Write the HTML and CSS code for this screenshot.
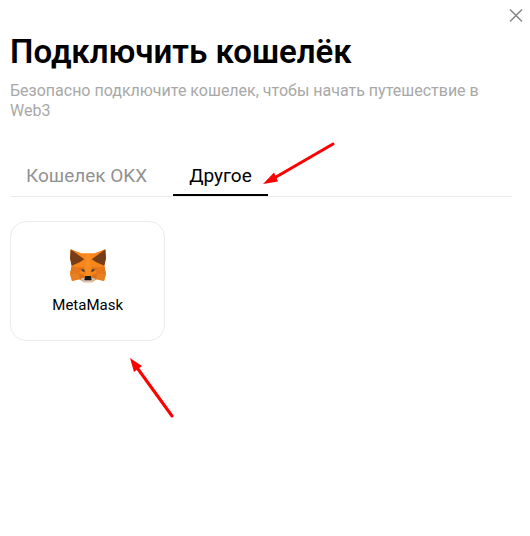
FILE: index.html
```html
<!DOCTYPE html>
<html lang="ru">
<head>
<meta charset="utf-8">
<meta name="viewport" content="width=device-width, initial-scale=1">
<title>Подключить кошелёк</title>
<link rel="stylesheet" href="styles.css">
</head>
<body>
<main class="dialog">
  <header class="top">
    <button class="close" type="button" aria-label="Закрыть">
      <svg width="14" height="14" viewBox="0 0 14 14" aria-hidden="true"><path d="M1 1.500l12 12M13 1.500L1 13.500"/></svg>
    </button>
  </header>
  <h1 class="title">Подключить кошелёк</h1>
  <p class="subtitle">Безопасно подключите кошелек, чтобы начать путешествие в Web3</p>
  <div class="tabs" role="tablist">
    <button class="tab" type="button" role="tab" aria-selected="false">Кошелек OKX</button>
    <button class="tab tab-active" type="button" role="tab" aria-selected="true">Другое
      <svg class="arrow arrow-tab" width="74" height="44" viewBox="0 0 74 44" aria-hidden="true"><path class="shaft" d="M71 2L14 35"/><path class="head" d="M1 42L12 30.500L16 39.500z"/></svg>
    </button>
  </div>
  <div class="wallets">
    <button class="wallet" type="button">
      <svg class="fox" width="36" height="34" viewBox="0 0 108 102" aria-hidden="true">
        <path fill="#f6851b" d="M2 1L35 13H73L106 1L108 27L103 50L108 75L102 96L80 91L67 100H41L28 91L6 96L0 75L5 50L0 27z"/>
        <path fill="#e4761b" d="M0 75L5 51L29 57L31 74zM108 75L103 51L79 57L77 74z"/>
        <path fill="#e88022" d="M0 75H30L28 91L6 96zM108 75H78L80 91L102 96z"/>
        <path fill="#763d16" d="M2 1L43 31L29 40L5 50L0 27zM106 1L65 31L79 40L103 50L108 27z"/>
        <path fill="#dc701a" d="M25 56L41 55L46 71L32 66zM83 56L67 55L62 71L76 66zM28 74L43 78L40 90L28 91zM80 74L65 78L68 90L80 91z"/>
        <path fill="#fa8c22" d="M48 14H60L63 53L60 83H48L45 53z"/>
        <path fill="#3c3a3a" d="M34 60L43 62L44 69L37 66zM74 60L65 62L64 69L71 66z"/>
        <path fill="#d7c1b3" d="M31 89L43 86H65L77 89L67 100H41z"/>
        <path fill="#161616" d="M45 81H63L65 94H43z"/>
      </svg>
      <span>MetaMask</span>
      <svg class="arrow arrow-wallet" width="46" height="62" viewBox="0 0 46 62" aria-hidden="true"><path class="shaft" d="M43 59L9 12"/><path class="head" d="M1 1L13 9L5 15z"/></svg>
    </button>
  </div>
</main>
</body>
</html>
```
FILE: styles.css
```css
* { box-sizing: border-box; }
body {
  margin: 0;
  background: #fff;
  color: #000;
  font-family: Roboto, "Noto Sans", sans-serif;
}
button {
  margin: 0;
  padding: 0;
  border: 0;
  background: none;
  color: inherit;
  font: inherit;
}
.dialog {
  min-height: 100vh;
  padding: 8px 18px 24px 10px;
}
.top {
  display: flex;
  justify-content: flex-end;
  margin-right: -11px;
}
.close {
  display: flex;
}
.close path {
  fill: none;
  stroke: #868686;
  stroke-width: 1.5;
}
.title {
  margin: 8px 0 0;
  font-size: 33px;
  line-height: 44px;
  font-weight: 600;
}
.subtitle {
  margin: 7px 0 0;
  color: #a8a8a8;
  font-size: 16px;
  line-height: 20px;
}
.tabs {
  display: flex;
  gap: 10px;
  margin-top: 35px;
  border-bottom: 1px solid #ebebeb;
}
.tab {
  position: relative;
  height: 40px;
  padding: 2px 16px 0;
  border-bottom: 2px solid transparent;
  color: #929292;
  font-size: 19px;
  line-height: 36px;
}
.tab-active {
  border-bottom-color: #000;
  color: #000;
}
.wallets {
  display: grid;
  grid-template-columns: repeat(auto-fill, minmax(150px, 1fr));
  gap: 18px;
  margin-top: 24px;
}
.wallet {
  position: relative;
  display: flex;
  flex-direction: column;
  align-items: center;
  gap: 12px;
  padding: 27px 12px 25px;
  border: 1px solid #ebebeb;
  border-radius: 16px;
  font-size: 15px;
  line-height: 20px;
}
.arrow {
  position: absolute;
  overflow: visible;
  pointer-events: none;
}
.arrow-tab {
  top: -14px;
  left: 89px;
}
.arrow-wallet {
  top: 135px;
  left: 118px;
}
.shaft {
  fill: none;
  stroke: #f00;
  stroke-width: 3;
  stroke-linecap: round;
}
.head { fill: #f00; }
```
